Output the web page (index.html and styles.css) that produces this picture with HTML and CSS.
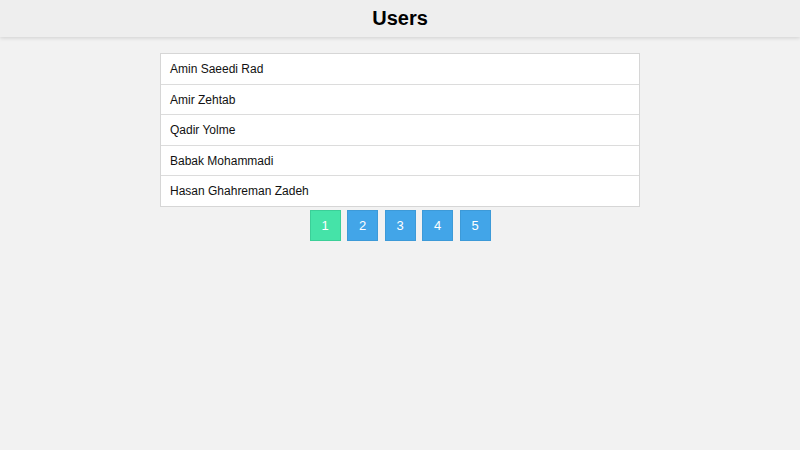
FILE: index.html
```html
<!DOCTYPE html>
<html lang="en">
<head>
  <meta charset="UTF-8" />
  <meta name="viewport" content="width=device-width, initial-scale=1.0"/>
  <title>Users</title>
  <link rel="stylesheet" href="styles.css">
</head>
<body>

  <!-- Header -->
  <div class="header">
    <h1>Users</h1>
  </div>

  <main>
    <ul class="user-list">
      <li>Amin Saeedi Rad</li>
      <li>Amir Zehtab</li>
      <li>Qadir Yolme</li>
      <li>Babak Mohammadi</li>
      <li>Hasan Ghahreman Zadeh</li>
    </ul>

    <div class="pagination">
      <button class="page active">1</button>
      <button class="page">2</button>
      <button class="page">3</button>
      <button class="page">4</button>
      <button class="page">5</button>
    </div>
  </main>

</body>
</html>
```

FILE: styles.css
```css
body {
  margin: 0;
  font-family: "Liberation Sans", Arial, sans-serif;
  background-color: #f2f2f2;
  font-size: 12px;
}

.header {
  background-color: #eeeeee;
  height: 37px;
  box-shadow: 0 1px 4px rgba(0,0,0,0.15);
  display: flex;
  align-items: center;
  justify-content: center;
}

.header h1 {
  margin: 0;
  font-size: 20px;
  font-weight: bold;
  color: #000;
}

.user-list {
  list-style: none;
  width: 480px;
  margin: 16px auto 0;
  padding: 0;
  background-color: white;
  border: 1px solid #d6d6d6;
  box-sizing: border-box;
}

.user-list li {
  padding: 9px 9px 7px;
  line-height: 13.6px;
  border-bottom: 1px solid #dcdcdc;
  color: #111;
}

.user-list li:last-child {
  border-bottom: none;
}

.pagination {
  display: flex;
  justify-content: center;
  gap: 6.5px;
  margin-top: 3px;
}

.page {
  width: 31px;
  height: 31px;
  border: 1px solid #3d9ad8;
  background-color: #42a5e8;
  color: white;
  font-family: "Liberation Sans", Arial, sans-serif;
  font-size: 13px;
  padding: 0;
  cursor: pointer;
}

.page.active {
  background-color: #45e3a8;
  border-color: #3bcf98;
}
```
